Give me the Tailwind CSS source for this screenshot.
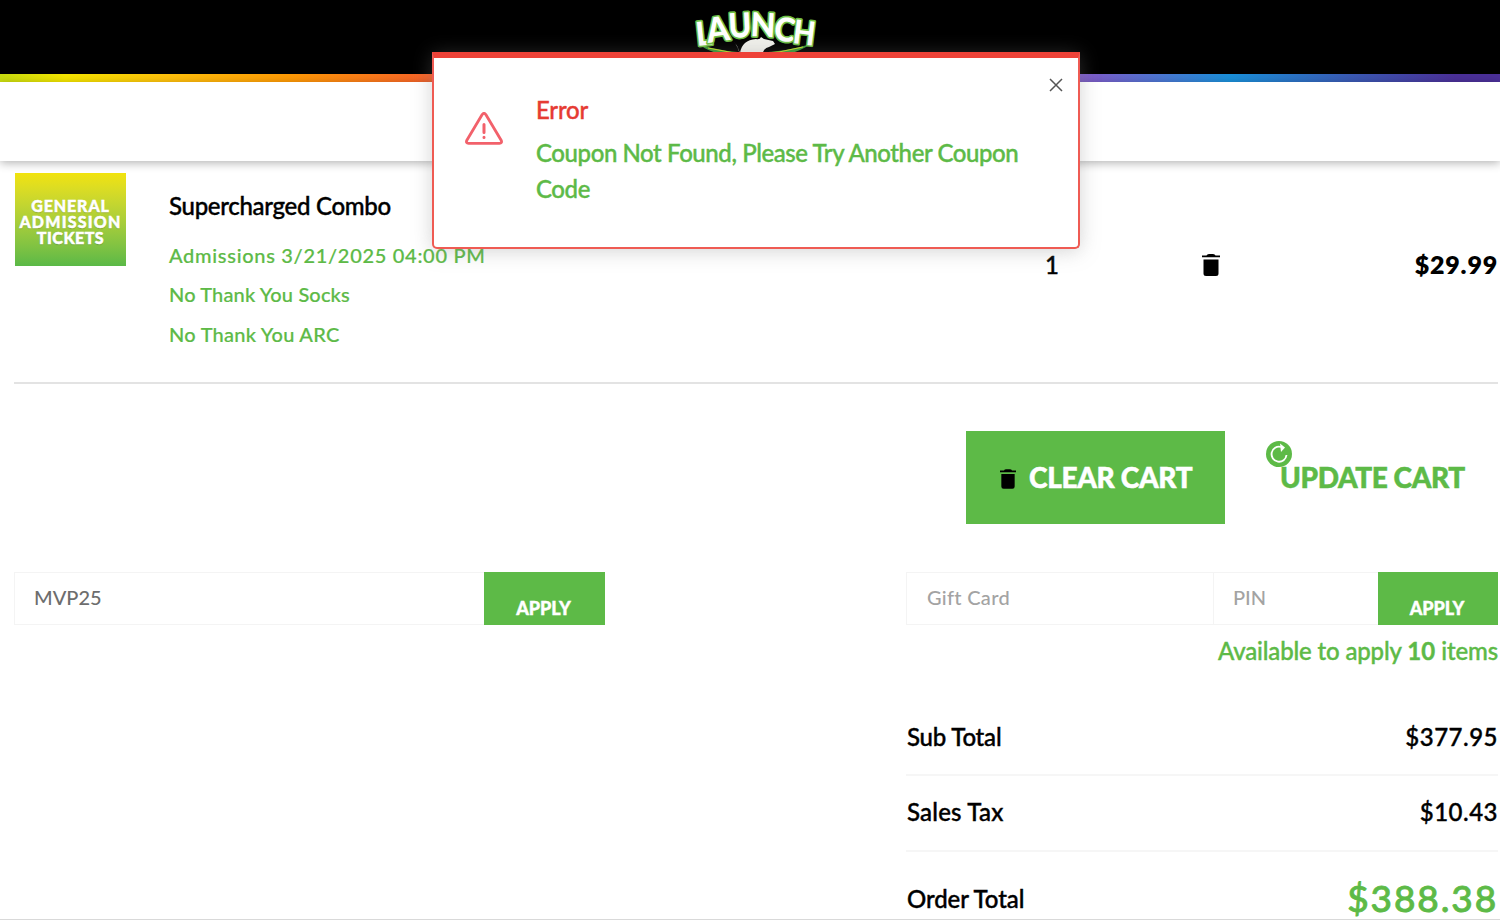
<!DOCTYPE html>
<html lang="en">
    <head>
        <meta charset="UTF-8">
        <title>Launch - Cart</title>
        <script src="https://cdn.jsdelivr.net/npm/@tailwindcss/browser@4"></script>
    </head>
    <body class="w-full h-[920px] overflow-hidden bg-white font-['Lato',sans-serif] font-medium text-black">
        <header class="relative z-10">
            <div class="flex justify-center h-[74px] bg-black pl-[10px]">
                <svg class="w-[130px] h-[60px]" viewBox="690 0 130 60">
                    <path d="M700 45Q755 61 811 44Q790 58 755 58Q715 57 700 45Z" fill="#3c9a36"/>
                    <path d="M708 48Q755 60 803 47" fill="none" stroke="#c9d92b" stroke-width="1"/>
                    <path d="M733 40Q738 46 740 53Q742 40 756 39Q760 40 761 37L764 39L773 41L775 44L769 47Q763 48 762 56H740Q739 48 733 40Z" fill="#f1f1ec"/>
                    <g font-family="Lato" font-weight="900" fill="#fff" stroke="#6fbf45" stroke-width="3.4" paint-order="stroke" stroke-linejoin="round">
                        <text transform="translate(697 46) rotate(-6)" font-size="33" textLength="16" lengthAdjust="spacingAndGlyphs">L</text>
                        <text transform="translate(708 43) rotate(-8)" font-size="34" textLength="23" lengthAdjust="spacingAndGlyphs">A</text>
                        <text transform="translate(729 38) rotate(-3)" font-size="34" textLength="23" lengthAdjust="spacingAndGlyphs">U</text>
                        <text transform="translate(750 36) rotate(3)" font-size="33" textLength="25" lengthAdjust="spacingAndGlyphs">N</text>
                        <text transform="translate(773 40) rotate(7)" font-size="33" textLength="21" lengthAdjust="spacingAndGlyphs">C</text>
                        <text transform="translate(792 43) rotate(7)" font-size="33" textLength="22" lengthAdjust="spacingAndGlyphs">H</text>
                    </g>
                </svg>
            </div>
            <div class="h-2 bg-[linear-gradient(90deg,#c8dc10_0px,#f5e600_65px,#ffc20c_165px,#ff9a05_290px,#f96a24_410px,#e8304c_560px,#a04bb0_900px,#7a5ecb_1095px,#1a90da_1230px,#3a5ab4_1350px,#4b3098_1455px,#4b3098_1500px)]"></div>
            <div class="h-[79px] bg-white shadow-[0_2px_9px_rgba(0,0,0,0.3)]"></div>
        </header>

        <main class="pl-[14px] pr-[2px]">
            <!-- cart item -->
            <div class="flex h-[223px] border-b-2 border-[#e3e3e3]">
                <div class="mt-3 mr-[43px] ml-px flex h-[93px] w-[111px] flex-col items-center justify-center bg-linear-to-b from-[#f2e30a] to-[#5ab947] pt-1 text-center text-base leading-4 font-black text-white text-shadow-xs [-webkit-text-stroke:0.5px]">
                    <span class="tracking-[0.9px]">GENERAL</span>
                    <span class="tracking-[1.2px]">ADMISSION</span>
                    <span class="tracking-[0.5px]">TICKETS</span>
                </div>
                <div class="w-[700px] pt-[29px] text-xl whitespace-nowrap text-[#5dba47] [-webkit-text-stroke:0.2px]">
                    <h2 class="mb-[15px] text-2xl leading-8 tracking-[-0.3px] text-black [-webkit-text-stroke:0.4px]">Supercharged Combo</h2>
                    <p class="h-[39px] leading-9 tracking-[0.7px]">Admissions 3/21/2025 04:00 PM</p>
                    <p class="h-10 leading-9 tracking-[0.15px]">No Thank You Socks</p>
                    <p class="h-10 leading-9 tracking-[0.27px]">No Thank You ARC</p>
                </div>
                <div class="flex flex-1 items-center pb-[14px] pl-[176px]">
                    <span class="w-[157px] text-2xl [-webkit-text-stroke:0.4px]">1</span>
                    <svg class="mt-px h-[22px] w-[18px]" viewBox="0 0 18 22">
                        <path d="M0 1.5H4.5Q5 0 7 0H11Q13 0 13.5 1.5H18V3.2H0ZM1.5 5.5H16.5V19.5Q16.5 22 14 22H4Q1.5 22 1.5 19.5Z"/>
                    </svg>
                    <span class="ml-auto text-[25px] font-extrabold tracking-[0.8px]">$29.99</span>
                </div>
            </div>

            <!-- cart actions -->
            <div class="mt-[47px] flex h-[93px] justify-end pr-[33px] text-[28px] font-black whitespace-nowrap [-webkit-text-stroke:0.5px]">
                <button class="flex w-[259px] items-center bg-[#5dba47] pb-0.5 pl-[34px] tracking-[-0.3px] text-white">
                    <svg class="mt-[5px] mr-[13px] h-5 w-4" viewBox="0 0 18 22">
                        <path fill="#000" d="M0 1.5H4.5Q5 0 7 0H11Q13 0 13.5 1.5H18V3.5H0ZM1.5 5.5H16.5V19.5Q16.5 22 14 22H4Q1.5 22 1.5 19.5Z"/>
                    </svg>
                    CLEAR CART
                </button>
                <button class="relative ml-[55px] flex w-[185px] items-center pb-0.5 tracking-[-0.4px] text-[#5dba47]">
                    <svg class="absolute top-[10px] -left-[14px] h-[26px] w-[26px]" viewBox="0 0 26 26">
                        <circle cx="13" cy="13" r="13" fill="#5dba47"/>
                        <path d="M20.5 14A7.5 7.5 0 1 1 15 6" fill="none" stroke="#fff" stroke-width="1.8"/>
                        <path d="M14 2.5L19 6.5L15 11Z" fill="#fff"/>
                    </svg>
                    UPDATE CART
                </button>
            </div>

            <div class="mt-12 flex justify-between">
                <!-- coupon -->
                <div class="flex h-[53px] w-[591px]">
                    <input type="text" value="MVP25" class="w-[470px] border border-r-0 border-[#f4f4f4] px-[19px] pb-1 text-xl text-[#6d6d6d] outline-none">
                    <button class="w-[121px] bg-[#5dba47] pt-[19px] pr-0.5 text-lg font-black text-white [-webkit-text-stroke:0.4px]">APPLY</button>
                </div>

                <div class="w-[592px]">
                    <!-- gift card -->
                    <div class="flex h-[53px]">
                        <input type="text" placeholder="Gift Card" class="w-[308px] border border-[#f4f4f4] px-5 pb-1 text-xl tracking-[0.3px] outline-none placeholder:text-[#a3a3a3]">
                        <input type="text" placeholder="PIN" class="w-[164px] border-y border-[#f4f4f4] px-[19px] pb-1 text-xl outline-none placeholder:text-[#a3a3a3]">
                        <button class="w-[120px] bg-[#5dba47] pt-[19px] pr-0.5 text-lg font-black text-white [-webkit-text-stroke:0.4px]">APPLY</button>
                    </div>
                    <p class="mt-[10px] text-right text-2xl leading-8 tracking-[-0.15px] whitespace-nowrap text-[#5dba47] [-webkit-text-stroke:0.4px]">Available to apply <b class="font-bold tracking-[0.2px]">10</b> items</p>

                    <!-- totals -->
                    <div class="mt-[33px] text-2xl whitespace-nowrap [-webkit-text-stroke:0.4px]">
                        <div class="flex h-[76px] items-center justify-between border-b-2 border-[#f6f6f6] pl-px">
                            <span class="tracking-[-0.2px]">Sub Total</span>
                            <span class="tracking-[0.5px]">$377.95</span>
                        </div>
                        <div class="flex h-[76px] items-center justify-between border-b-2 border-[#f6f6f6] pb-0.5 pl-px">
                            <span class="tracking-[0.2px]">Sales Tax</span>
                            <span class="tracking-[0.5px]">$10.43</span>
                        </div>
                        <div class="flex h-[94px] items-center justify-between pl-px">
                            <span class="tracking-[-0.1px]">Order Total</span>
                            <span class="pb-[3px] text-[37px] tracking-[1.9px] text-[#5dba47] [-webkit-text-stroke:0.8px]">$388.38</span>
                        </div>
                    </div>
                </div>
            </div>
        </main>

        <!-- error popup -->
        <div class="absolute top-[52px] left-[432px] z-20 flex h-[197px] w-[648px] rounded-b-[5px] border-2 border-t-[6px] border-[#ef5b53] border-t-[#ee4238] bg-white pt-[34px] pl-[31px] shadow-[0_2px_20px_rgba(130,130,130,0.35)]">
            <svg class="mt-[20px] mr-[33px] h-[33px] w-[38px]" viewBox="0 0 38 33" fill="none" stroke="#f2616b" stroke-linecap="round" stroke-linejoin="round">
                <path d="M17.2 2.5Q19 .2 20.8 2.5L36.3 28.5Q37.3 31.3 34.5 31.3H3.5Q.7 31.3 1.7 28.5Z" stroke-width="2.8"/>
                <path d="M19 12.5V20.5M19 25.2V25.4" stroke-width="3"/>
            </svg>
            <div class="text-2xl leading-9 whitespace-nowrap text-[#5dba47] [-webkit-text-stroke:0.4px]">
                <h3 class="mb-[7px] tracking-[-0.2px] text-[#e63b33]">Error</h3>
                <p class="tracking-[-0.42px]">Coupon Not Found, Please Try Another Coupon<br>Code</p>
            </div>
            <button class="absolute top-[20px] right-[15px]">
                <svg class="h-[14px] w-[14px]" viewBox="0 0 14 14" stroke="#555" stroke-width="1.5">
                    <path d="M1 1L13 13M13 1L1 13"/>
                </svg>
            </button>
        </div>
        <div class="absolute bottom-0 left-0 h-px w-full bg-[#d9d9d9]"></div>
    </body>
</html>
